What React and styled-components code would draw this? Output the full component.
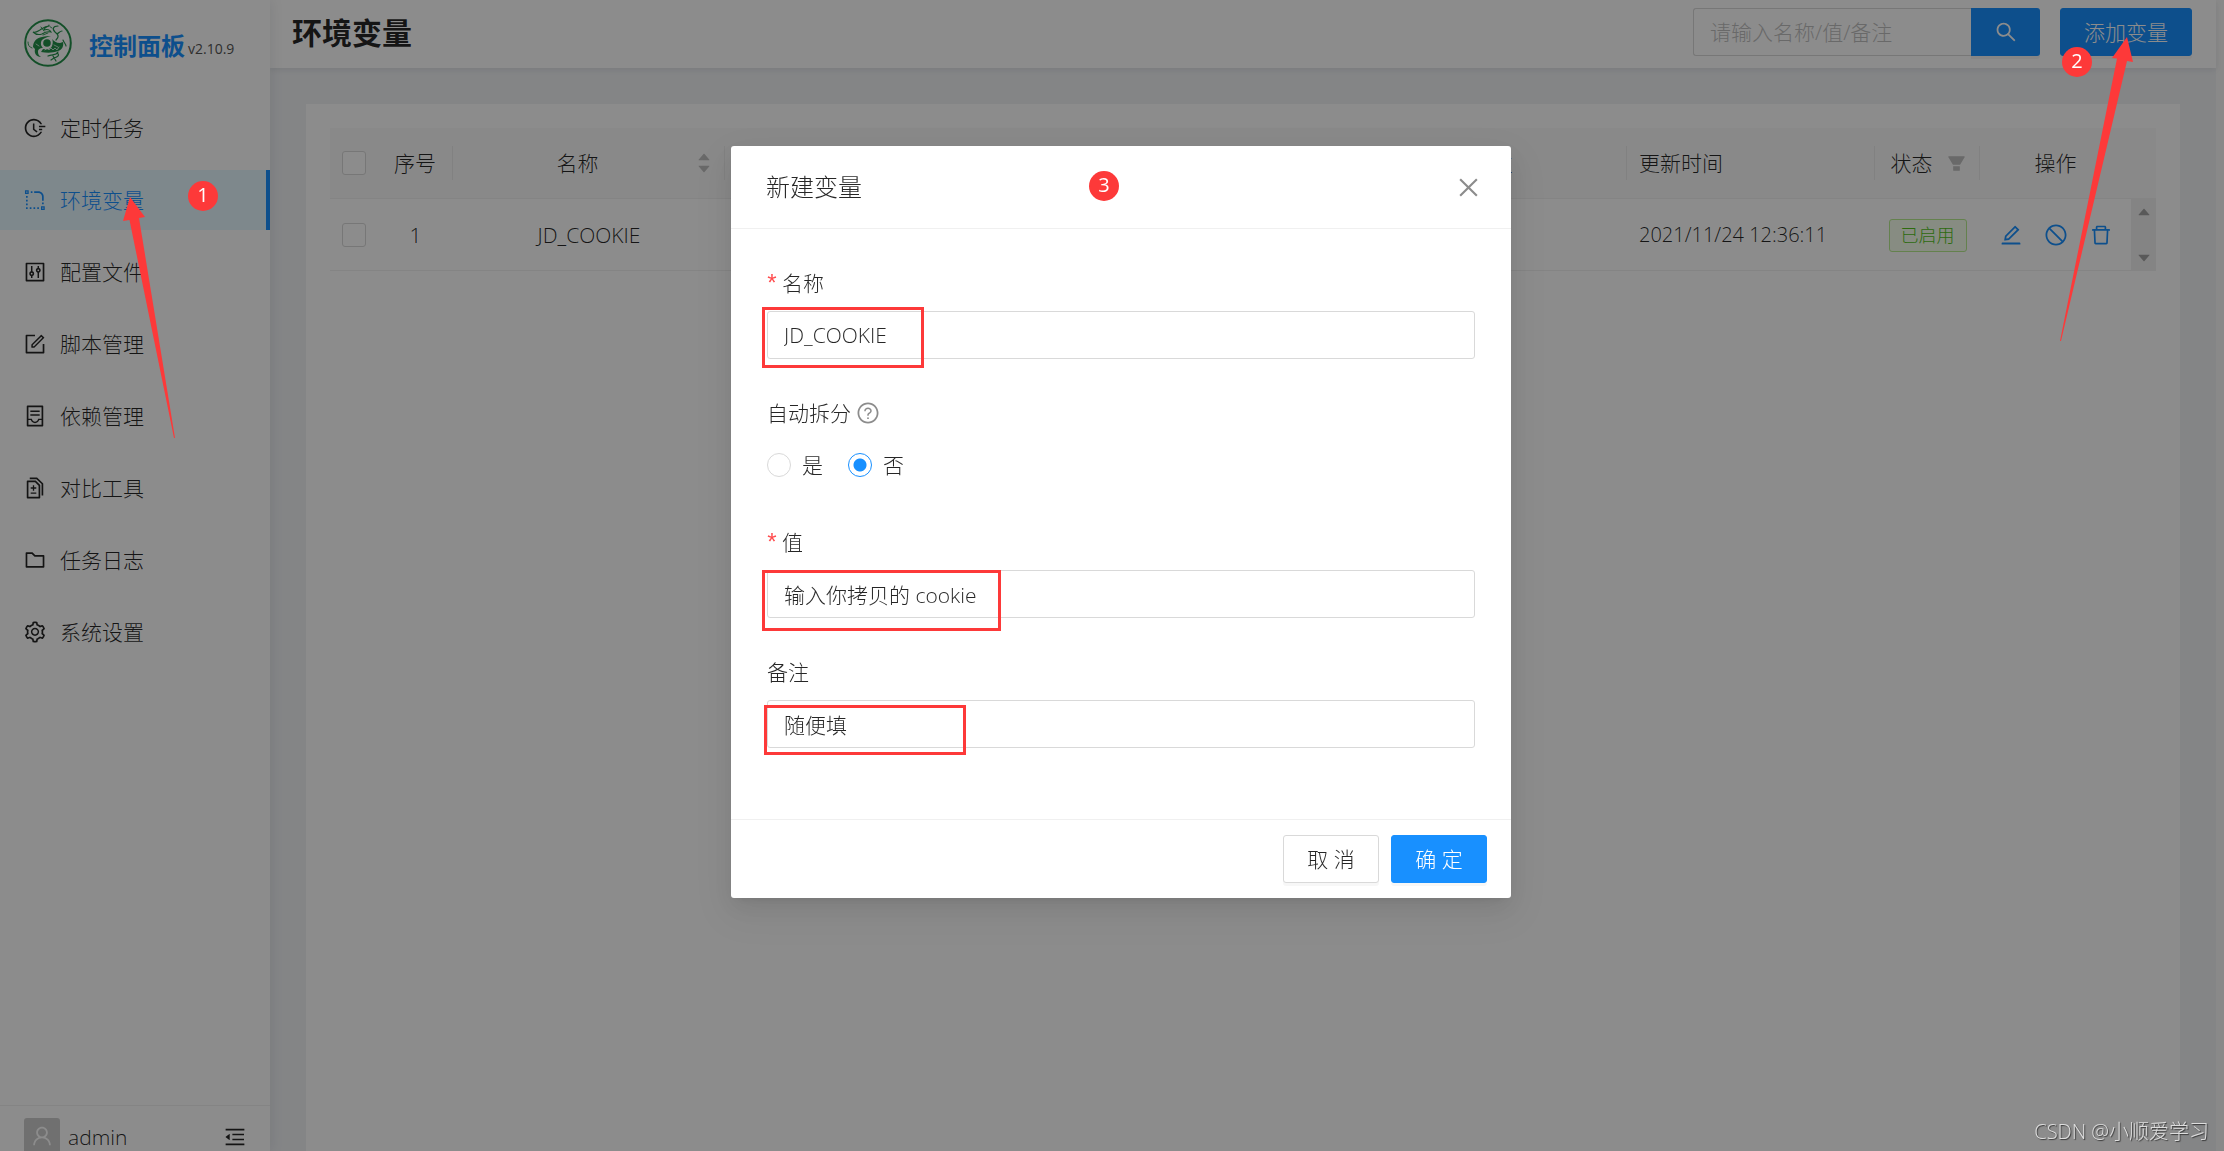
import React from 'react';
import styled, { createGlobalStyle } from 'styled-components';
import {
  AiFillCaretDown,
  AiFillCaretUp,
  AiFillFilter,
  AiOutlineClose,
  AiOutlineContainer,
  AiOutlineControl,
  AiOutlineDelete,
  AiOutlineDiff,
  AiOutlineEdit,
  AiOutlineFieldTime,
  AiOutlineFolder,
  AiOutlineForm,
  AiOutlineMenuFold,
  AiOutlineQuestionCircle,
  AiOutlineRadiusSetting,
  AiOutlineSearch,
  AiOutlineSetting,
  AiOutlineStop,
  AiOutlineUser,
} from 'react-icons/ai';

const palette = {
  primary: '#1890ff',
  text: 'rgba(0, 0, 0, 0.85)',
  border: '#d9d9d9',
  split: '#f0f0f0',
  mark: '#fd3939',
};

const GlobalStyle = createGlobalStyle`
  *, *::before, *::after {
    box-sizing: border-box;
  }
  body {
    margin: 0;
    color: ${palette.text};
    font-family: 'Open Sans', 'Noto Sans CJK SC', sans-serif;
    font-size: 21px;
    font-weight: 300;
    line-height: 32px;
  }
  button, input {
    font: inherit;
    color: inherit;
  }
  button {
    cursor: pointer;
  }
  svg {
    display: block;
    flex: none;
  }
`;

const Layout = styled.div`
  display: flex;
  height: 100vh;
  overflow: hidden;
  background: #f9f9f9;
`;

/* sidebar */

const Sidebar = styled.aside`
  position: relative;
  display: flex;
  flex-direction: column;
  flex: none;
  width: 270px;
  background: #fff;
  box-shadow: 2px 0 12px rgba(0, 21, 41, 0.08);
`;

const Brand = styled.a`
  display: flex;
  align-items: center;
  height: 86px;
  padding-left: 24px;
  color: ${palette.primary};
  text-decoration: none;
`;

const BrandName = styled.span`
  margin-left: 17px;
  padding-top: 6px;
  font-size: 24px;
  font-weight: 700;
`;

const Version = styled.span`
  margin-left: 3px;
  padding-top: 12px;
  font-size: 14px;
  font-weight: 400;
  color: #555;
`;

const Menu = styled.nav`
  display: flex;
  flex: 1;
  flex-direction: column;
  gap: 12px;
  padding-top: 12px;
`;

const MenuItem = styled.div`
  position: relative;
`;

const MenuLink = styled.a`
  display: flex;
  align-items: center;
  gap: 13px;
  height: 60px;
  padding-left: 23px;
  color: ${props => (props.$active ? palette.primary : palette.text)};
  background: ${props => (props.$active ? '#e6f7ff' : 'transparent')};
  border-right: 4px solid ${props => (props.$active ? palette.primary : 'transparent')};
  text-decoration: none;
`;

const SidebarFooter = styled.div`
  display: flex;
  align-items: flex-start;
  height: 46px;
  padding: 12px 23px 0 24px;
  overflow: hidden;
  border-top: 1px solid ${palette.split};
`;

const Avatar = styled.span`
  display: flex;
  align-items: center;
  justify-content: center;
  width: 36px;
  height: 36px;
  color: #fff;
  background: #ccc;
  border-radius: 3px;
`;

const UserName = styled.span`
  flex: 1;
  margin-left: 8px;
  padding-top: 3px;
`;

const FoldButton = styled.button`
  padding: 7px 0 0;
  color: ${palette.text};
  background: none;
  border: 0;
`;

/* page */

const Main = styled.main`
  display: flex;
  flex: 1;
  flex-direction: column;
  min-width: 0;
  margin-right: 8px;
  background: #f0f2f5;
`;

const Header = styled.header`
  display: flex;
  align-items: flex-start;
  flex: none;
  height: 68px;
  padding: 8px 24px 0 22px;
  background: #fff;
  box-shadow: 0 2px 6px rgba(0, 21, 41, 0.08);
`;

const PageTitle = styled.h1`
  flex: 1;
  margin: 0;
  font-size: 30px;
  font-weight: 700;
  line-height: 50px;
`;

const Search = styled.form`
  display: flex;
  margin-right: 20px;
`;

const SearchInput = styled.input`
  width: 278px;
  height: 48px;
  padding: 0 16px;
  background: #fff;
  border: 1px solid ${palette.border};
  border-right: 0;
  border-radius: 3px 0 0 3px;

  &::placeholder {
    color: #bfbfbf;
    opacity: 1;
  }
`;

const SearchButton = styled.button`
  display: flex;
  align-items: center;
  justify-content: center;
  width: 69px;
  height: 48px;
  padding: 0;
  color: #fff;
  background: ${palette.primary};
  border: 0;
  border-radius: 0 3px 3px 0;
  box-shadow: 0 3px 0 rgba(0, 0, 0, 0.04);
`;

const AddWrap = styled.div`
  position: relative;
`;

const Button = styled.button`
  display: block;
  min-width: 96px;
  height: 48px;
  padding: 0 23px;
  color: ${props => (props.$primary ? '#fff' : palette.text)};
  background: ${props => (props.$primary ? palette.primary : '#fff')};
  border: 1px solid ${props => (props.$primary ? palette.primary : palette.border)};
  border-radius: 3px;
  box-shadow: 0 3px 0 rgba(0, 0, 0, 0.03);
  white-space: nowrap;
`;

const Card = styled.section`
  flex: 1;
  margin: 36px 36px 0;
  padding: 24px;
  background: #fff;
`;

/* table */

const Table = styled.table`
  width: 100%;
  table-layout: fixed;
  border-collapse: separate;
  border-spacing: 0;
`;

const Th = styled.th`
  height: 71px;
  padding: 0;
  font-weight: 300;
  text-align: left;
  background: #fafafa;
  border-bottom: 1px solid ${palette.split};
`;

const HeadCell = styled.div`
  display: flex;
  align-items: center;
  justify-content: ${props => props.$justify || 'center'};
  height: 34px;
  padding: 0 12px;
  border-right: ${props => (props.$divider ? '1px solid #ececec' : '0')};
`;

const HeadText = styled.span`
  flex: ${props => (props.$grow ? 1 : 'none')};
  text-align: center;
`;

const Sorter = styled.span`
  display: flex;
  flex-direction: column;
  margin-left: 6px;
  color: #bfbfbf;

  svg + svg {
    margin-top: -4px;
  }
`;

const FilterIcon = styled.span`
  margin-left: 10px;
  color: #bfbfbf;
`;

const Td = styled.td`
  height: 72px;
  padding: 0 12px;
  font-size: ${props => (props.$small ? '20px' : '21px')};
  text-align: ${props => props.$align || 'center'};
  border-bottom: 1px solid ${palette.split};
`;

const Checkbox = styled.input.attrs({ type: 'checkbox' })`
  display: block;
  width: 24px;
  height: 24px;
  margin: 0 auto;
  appearance: none;
  background: #fff;
  border: 1px solid ${palette.border};
  border-radius: 3px;
`;

const Tag = styled.span`
  display: inline-block;
  padding: 0 11px;
  color: #52c41a;
  font-size: 18px;
  line-height: 31px;
  vertical-align: middle;
  background: #f6ffed;
  border: 1px solid #b7eb8f;
  border-radius: 3px;
`;

const Actions = styled.div`
  display: flex;
  justify-content: center;
  gap: 21px;
`;

const IconButton = styled.button`
  padding: 0;
  color: ${props => props.$color || palette.primary};
  background: none;
  border: 0;
`;

const ScrollCell = styled.td`
  height: 72px;
  padding: 0;
  background: #f1f1f1;
`;

const ScrollBar = styled.div`
  display: flex;
  flex-direction: column;
  align-items: center;
  justify-content: space-between;
  height: 72px;
  padding: 5px 0;
  color: #a3a3a3;
`;

/* dialog */

const ModalMask = styled.div`
  position: fixed;
  inset: 0;
  z-index: 10;
  display: flex;
  align-items: flex-start;
  justify-content: center;
  padding: 146px 0 0 18px;
  background: rgba(0, 0, 0, 0.45);
`;

const Modal = styled.div`
  width: 780px;
  background: #fff;
  border-radius: 3px;
  box-shadow: 0 5px 9px -6px rgba(0, 0, 0, 0.12), 0 9px 24px rgba(0, 0, 0, 0.08),
    0 14px 42px 12px rgba(0, 0, 0, 0.05);
`;

const ModalHeader = styled.header`
  position: relative;
  display: flex;
  align-items: center;
  justify-content: space-between;
  height: 83px;
  padding: 0 29px 0 35px;
  border-bottom: 1px solid ${palette.split};
`;

const ModalTitle = styled.h2`
  margin: 0;
  font-size: 24px;
  font-weight: 300;
`;

const ModalBody = styled.div`
  display: flex;
  flex-direction: column;
  gap: 36px;
  padding: 36px 36px 71px;
`;

const ModalFooter = styled.footer`
  display: flex;
  justify-content: flex-end;
  gap: 12px;
  padding: 15px 24px;
  border-top: 1px solid ${palette.split};
`;

const Label = styled.label`
  display: flex;
  align-items: center;
  height: 36px;
  margin-bottom: 10px;
`;

const Required = styled.span`
  display: flex;
  justify-content: center;
  width: 10px;
  margin-right: 5px;
  padding-top: 6px;
  color: #ff4d4f;
  font-family: 'Liberation Mono', monospace;
  font-size: 24px;
  font-weight: 400;
`;

const Help = styled.span`
  margin-left: 5px;
  color: rgba(0, 0, 0, 0.45);
`;

const Control = styled.div`
  position: relative;
`;

const TextInput = styled.input`
  display: block;
  width: 100%;
  height: 48px;
  padding: 0 16px;
  background: #fff;
  border: 1px solid ${palette.border};
  border-radius: 3px;
`;

const RadioRow = styled.div`
  display: flex;
  align-items: center;
  gap: 25px;
  height: 47px;
`;

const RadioLabel = styled.label`
  display: flex;
  align-items: center;
  gap: 11px;
`;

const Radio = styled.input.attrs({ type: 'radio' })`
  width: 24px;
  height: 24px;
  margin: 0;
  appearance: none;
  background: #fff;
  border: 1px solid ${palette.border};
  border-radius: 50%;

  &:checked {
    background: radial-gradient(circle, ${palette.primary} 6px, #fff 7px);
    border-color: ${palette.primary};
  }
`;

/* guide marks drawn above the page */

const Badge = styled.span`
  position: absolute;
  top: ${props => props.$top}px;
  left: ${props => props.$left}px;
  z-index: 20;
  width: 30px;
  height: 30px;
  color: #fff;
  font-size: 20px;
  font-weight: 400;
  line-height: 28px;
  text-align: center;
  background: ${palette.mark};
  border-radius: 50%;
`;

const Arrow = styled.svg`
  position: absolute;
  top: ${props => props.$top}px;
  left: ${props => props.$left}px;
  z-index: 20;
  fill: ${palette.mark};
  pointer-events: none;
`;

const Highlight = styled.span`
  position: absolute;
  top: ${props => props.$top}px;
  left: ${props => props.$left}px;
  width: ${props => props.$width}px;
  height: ${props => props.$height}px;
  border: 3px solid ${palette.mark};
  pointer-events: none;
`;

const Watermark = styled.div`
  position: fixed;
  right: 15px;
  bottom: 3px;
  z-index: 20;
  color: #dedede;
  font-size: 20px;
  text-shadow: 1px 1px 1px rgba(0, 0, 0, 0.6);
`;

const Logo = () => (
  <svg width="48" height="48" viewBox="0 0 48 48" fill="none" stroke="#24904a" strokeLinecap="round">
    <circle cx="24" cy="24" r="22.8" strokeWidth="2" />
    <circle cx="23" cy="24" r="3.8" fill="#24904a" stroke="none" />
    <path
      fill="#24904a"
      stroke="none"
      d="M9 28c0-5 3-9 9-10 3-1 6-1 9-1-4 1-7 2-9 4-2 3-1 6 1 8-3 0-5 1-5 4 0 2 1 4 3 5-5 0-7-4-6-8z"
    />
    <path
      fill="#24904a"
      stroke="none"
      d="M28 20c2 2 4 4 8 4l3-1c1 4-1 8-5 9-5 2-11 2-17 1l2-3c4 1 8 0 9-3s1-5 0-7z"
    />
    <path strokeWidth="1.1" d="M9 13c3 1 5-1 7-2 3-2 5-4 9-4-3 1-5 2-5 4 3-1 6 0 7 2-4-1-6 0-9 2-3 1-6 1-9-2z" />
    <path strokeWidth="0.9" d="M17 8l3 4M24 14l-5 2M28 9c-2-1-3-2-3-3M4 23c0 3 1 5 4 6" />
    <path strokeWidth="1.2" d="M34 7c-5 0-6 3-3 6 4 3 4 5 1 8M33 15c2-1 3-3 5-3M39 21c1 3 3 4 3 6" />
    <path strokeWidth="1.2" d="M24 37c4-2 8 0 10-4M33 34c3 2 1 4-3 5l-3 2M29 37l3 5" />
    <path stroke="#fff" strokeWidth="0.7" d="M21 31l2-2 2 2 2-2 2 2 2-2 2 2 2-3M30 26l4 2M12 25l3 2" />
  </svg>
);

const menu = [
  { text: '定时任务', Icon: AiOutlineFieldTime },
  { text: '环境变量', Icon: AiOutlineRadiusSetting, active: true },
  { text: '配置文件', Icon: AiOutlineControl },
  { text: '脚本管理', Icon: AiOutlineForm },
  { text: '依赖管理', Icon: AiOutlineContainer },
  { text: '对比工具', Icon: AiOutlineDiff },
  { text: '任务日志', Icon: AiOutlineFolder },
  { text: '系统设置', Icon: AiOutlineSetting },
];

const marks = {
  name: { top: -4, left: -5, width: 162, height: 61 },
  value: { top: 0, left: -5, width: 239, height: 61 },
  remarks: { top: 5, left: -3, width: 202, height: 50 },
};

const Field = ({ id, label, value, required }) => {
  const mark = marks[id];
  return (
    <div>
      <Label htmlFor={id}>
        {required && <Required>*</Required>}
        {label}
      </Label>
      <Control>
        <TextInput id={id} type="text" defaultValue={value} />
        <Highlight $top={mark.top} $left={mark.left} $width={mark.width} $height={mark.height} />
      </Control>
    </div>
  );
};

const SideMenu = () => (
  <Sidebar>
    <Brand href="#">
      <Logo />
      <BrandName>控制面板</BrandName>
      <Version>v2.10.9</Version>
    </Brand>
    <Menu>
      {menu.map(({ text, Icon, active }) => (
        <MenuItem key={text}>
          <MenuLink href="#" $active={active}>
            <Icon size={24} />
            {text}
          </MenuLink>
          {active && (
            <>
              <Badge $top={11} $left={188}>
                1
              </Badge>
              <Arrow $top={24} $left={120} width="60" height="250">
                <path d="M10 3L25 23L19 24L55 244H54L9.500 26L3 27Z" />
              </Arrow>
            </>
          )}
        </MenuItem>
      ))}
    </Menu>
    <SidebarFooter>
      <Avatar>
        <AiOutlineUser size={24} />
      </Avatar>
      <UserName>admin</UserName>
      <FoldButton type="button" aria-label="收起菜单">
        <AiOutlineMenuFold size={24} />
      </FoldButton>
    </SidebarFooter>
  </Sidebar>
);

const EnvTable = () => (
  <Table>
    <colgroup>
      <col width="48" />
      <col width="75" />
      <col width="272" />
      <col />
      <col width="270" />
      <col width="248" />
      <col width="105" />
      <col width="151" />
      <col width="25" />
    </colgroup>
    <thead>
      <tr>
        <Th>
          <Checkbox aria-label="全选" />
        </Th>
        <Th>
          <HeadCell $divider>序号</HeadCell>
        </Th>
        <Th>
          <HeadCell $divider>
            <HeadText $grow>名称</HeadText>
            <Sorter>
              <AiFillCaretUp size={16} />
              <AiFillCaretDown size={16} />
            </Sorter>
          </HeadCell>
        </Th>
        <Th>
          <HeadCell $divider>值</HeadCell>
        </Th>
        <Th>
          <HeadCell $divider>备注</HeadCell>
        </Th>
        <Th>
          <HeadCell $divider $justify="flex-start">
            更新时间
          </HeadCell>
        </Th>
        <Th>
          <HeadCell $divider>
            <HeadText $grow>状态</HeadText>
            <FilterIcon>
              <AiFillFilter size={21} />
            </FilterIcon>
          </HeadCell>
        </Th>
        <Th>
          <HeadCell>操作</HeadCell>
        </Th>
        <Th />
      </tr>
    </thead>
    <tbody>
      <tr>
        <Td>
          <Checkbox aria-label="选择 JD_COOKIE" />
        </Td>
        <Td>1</Td>
        <Td>JD_COOKIE</Td>
        <Td />
        <Td />
        <Td $small $align="left">
          2021/11/24 12:36:11
        </Td>
        <Td>
          <Tag>已启用</Tag>
        </Td>
        <Td>
          <Actions>
            <IconButton type="button" aria-label="编辑">
              <AiOutlineEdit size={24} />
            </IconButton>
            <IconButton type="button" aria-label="禁用">
              <AiOutlineStop size={24} />
            </IconButton>
            <IconButton type="button" aria-label="删除">
              <AiOutlineDelete size={24} />
            </IconButton>
          </Actions>
        </Td>
        <ScrollCell>
          <ScrollBar>
            <AiFillCaretUp size={16} />
            <AiFillCaretDown size={16} />
          </ScrollBar>
        </ScrollCell>
      </tr>
    </tbody>
  </Table>
);

const EnvModal = () => (
  <ModalMask>
    <Modal role="dialog" aria-modal="true" aria-labelledby="modal-title">
      <ModalHeader>
        <ModalTitle id="modal-title">新建变量</ModalTitle>
        <IconButton type="button" aria-label="关闭" $color="rgba(0, 0, 0, 0.45)">
          <AiOutlineClose size={27} />
        </IconButton>
        <Badge $top={25} $left={358}>
          3
        </Badge>
      </ModalHeader>
      <ModalBody>
        <Field id="name" label="名称" value="JD_COOKIE" required />
        <div role="radiogroup" aria-labelledby="split-label">
          <Label as="div" id="split-label">
            自动拆分
            <Help>
              <AiOutlineQuestionCircle size={24} />
            </Help>
          </Label>
          <RadioRow>
            <RadioLabel>
              <Radio name="split" value="1" />是
            </RadioLabel>
            <RadioLabel>
              <Radio name="split" value="0" defaultChecked />否
            </RadioLabel>
          </RadioRow>
        </div>
        <Field id="value" label="值" value="输入你拷贝的 cookie" required />
        <Field id="remarks" label="备注" value="随便填" />
      </ModalBody>
      <ModalFooter>
        <Button type="button">取 消</Button>
        <Button type="button" $primary>
          确 定
        </Button>
      </ModalFooter>
    </Modal>
  </ModalMask>
);

const App = () => {
  return (
    <>
      <GlobalStyle />
      <Layout>
        <SideMenu />
        <Main>
          <Header>
            <PageTitle>环境变量</PageTitle>
            <Search onSubmit={e => e.preventDefault()}>
              <SearchInput type="text" aria-label="搜索" placeholder="请输入名称/值/备注" />
              <SearchButton type="submit" aria-label="搜索">
                <AiOutlineSearch size={24} />
              </SearchButton>
            </Search>
            <AddWrap>
              <Button type="button" $primary>
                添加变量
              </Button>
              <Badge $top={39} $left={2}>
                2
              </Badge>
              <Arrow $top={24} $left={-5} width="90" height="312">
                <path d="M72 5L78 30L72 29L6 309H5L62 26.500L57 26Z" />
              </Arrow>
            </AddWrap>
          </Header>
          <Card>
            <EnvTable />
          </Card>
        </Main>
      </Layout>
      <EnvModal />
      <Watermark>CSDN @小顺爱学习</Watermark>
    </>
  );
};

export default App;
